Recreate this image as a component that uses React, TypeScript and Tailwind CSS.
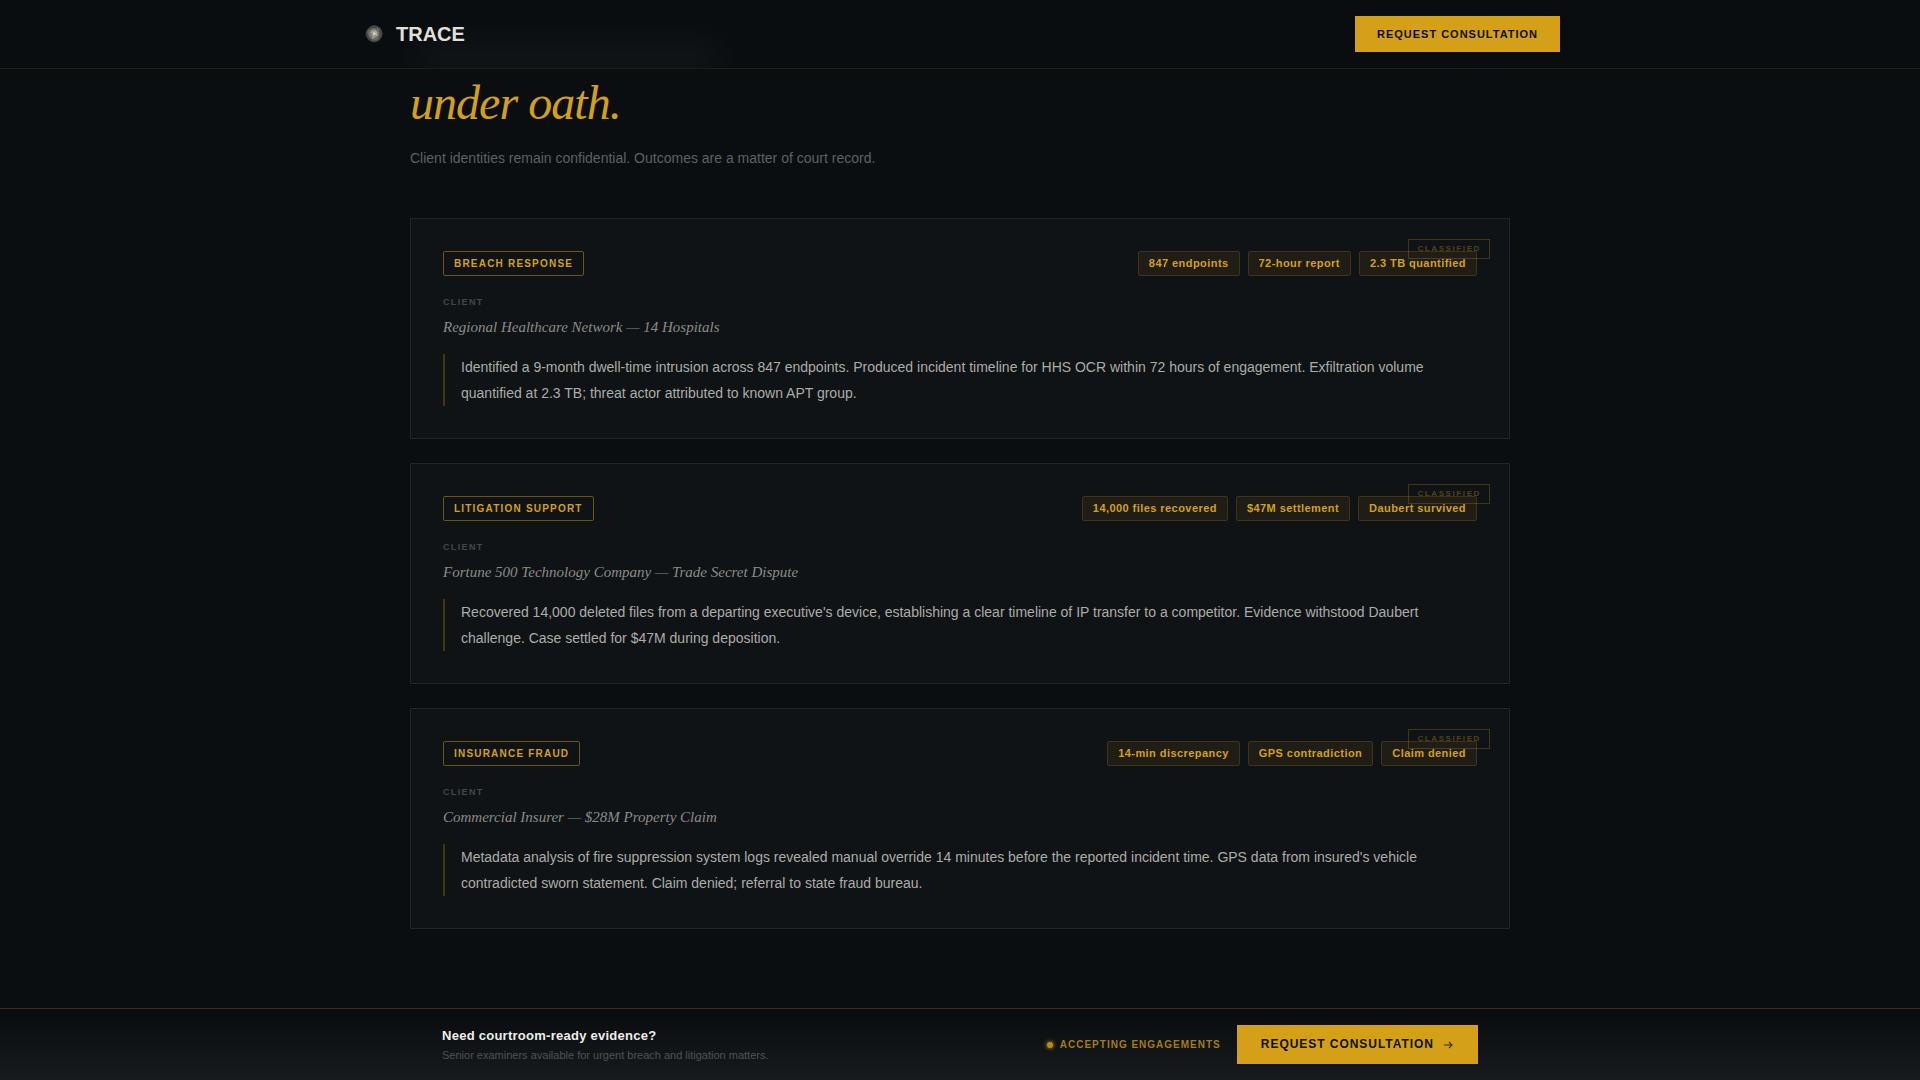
import React from 'react';

interface CaseFile {
  id: string;
  type: string;
  client: string;
  summary: string;
  metrics: string[];
}

const CASES: CaseFile[] = [
  {
    id: 'breach',
    type: 'Breach Response',
    client: 'Regional Healthcare Network — 14 Hospitals',
    summary:
      'Identified a 9-month dwell-time intrusion across 847 endpoints. Produced incident timeline for HHS OCR within 72 hours of engagement. Exfiltration volume quantified at 2.3 TB; threat actor attributed to known APT group.',
    metrics: ['847 endpoints', '72-hour report', '2.3 TB quantified'],
  },
  {
    id: 'litigation',
    type: 'Litigation Support',
    client: 'Fortune 500 Technology Company — Trade Secret Dispute',
    summary:
      "Recovered 14,000 deleted files from a departing executive's device, establishing a clear timeline of IP transfer to a competitor. Evidence withstood Daubert challenge. Case settled for $47M during deposition.",
    metrics: ['14,000 files recovered', '$47M settlement', 'Daubert survived'],
  },
  {
    id: 'fraud',
    type: 'Insurance Fraud',
    client: 'Commercial Insurer — $28M Property Claim',
    summary:
      "Metadata analysis of fire suppression system logs revealed manual override 14 minutes before the reported incident time. GPS data from insured's vehicle contradicted sworn statement. Claim denied; referral to state fraud bureau.",
    metrics: ['14-min discrepancy', 'GPS contradiction', 'Claim denied'],
  },
];

const Logo = () => (
  <svg viewBox="0 0 28 28" className="h-7 w-7" aria-hidden="true">
    <defs>
      <radialGradient id="orb" cx="50%" cy="50%" r="50%">
        <stop offset="0%" stopColor="#b5b3a2" />
        <stop offset="35%" stopColor="#83837a" />
        <stop offset="75%" stopColor="#5c5e58" />
        <stop offset="100%" stopColor="#2c2f2e" />
      </radialGradient>
    </defs>
    <path
      d="M10 6.5 13.5 5l3.5.8 3.2 1.6 1.6 3 1 3.6-1.2 3.4-2.2 3-3.4 1.8-3.6.2-3.4-1.8-2.4-3L5.4 14l1-3.6z"
      fill="url(#orb)"
    />
    <path d="M9 9.5c2-2 5-2.6 7.6-1.6M7.5 14c.2 3 2 5.2 4.5 6M19.5 10.5c1.3 2.5 1 5.5-.8 7.5" fill="none" stroke="#383b36" strokeWidth="1" />
    <path d="M11 13c.4-2 3-3 5-1.6 1.6 1.4 1.2 4-.6 5.1M12.5 19l1.5-4" fill="none" stroke="#c9c6b2" strokeWidth="1" opacity=".7" />
    <circle cx="14.3" cy="13.5" r="1.5" fill="#d0cdba" />
  </svg>
);

const CaseCard = ({ item }: { item: CaseFile }) => (
  <article className="relative border border-[#212527] bg-[#101315] p-8">
    <div className="flex flex-wrap items-center justify-between gap-4">
      <span className="rounded-xs border border-[#6b551b] px-2.5 py-1 text-[10px] leading-[15px] font-bold tracking-[0.12em] text-[#d4a017] uppercase">
        {item.type}
      </span>
      <ul className="flex flex-wrap gap-2">
        {item.metrics.map((m) => (
          <li
            key={m}
            className="rounded-xs border border-[#3f3415] bg-[#1f1d15] px-2.5 py-1 text-[11px] leading-[15px] font-bold tracking-[0.04em] text-[#d4a017]"
          >
            {m}
          </li>
        ))}
      </ul>
    </div>

    <p className="mt-5 text-[9px] leading-3 font-bold tracking-[0.15em] text-[#444749] uppercase">Client</p>
    <h3 className="mt-2 font-['Liberation_Serif',serif] text-[15px] leading-[22px] text-[#8b8b88] italic">{item.client}</h3>
    <p className="mt-4 border-l-2 border-[#44370f] pl-4 text-sm leading-[26px] text-[#acaca8]">{item.summary}</p>

    {/* stamp sits over the metric row */}
    <span className="absolute top-5 right-[19px] border border-[#d4a017]/25 px-2 py-[3px] text-[8px] leading-3 font-bold tracking-[0.2em] text-[#d4a017]/35 uppercase">
      Classified
    </span>
  </article>
);

export default function App() {
  return (
    <div className="flex min-h-screen flex-col bg-[#0a0e11] font-['Liberation_Sans',Arial,sans-serif]">
      {/* Header */}
      <header className="sticky top-0 z-20 overflow-hidden border-b border-[#22200f] bg-[#0a0d0f]">
        <div className="relative mx-auto flex w-full max-w-[1200px] items-center justify-between py-4">
          <div className="pointer-events-none absolute top-9 left-14 h-12 w-76 bg-white/3 blur-lg" />
          <a href="#top" className="relative flex items-center gap-2 text-xl leading-7 font-bold text-[#e2e0db]">
            <Logo />
            TRACE
          </a>
          <button
            type="button"
            className="relative bg-[#d4a017] px-[22px] text-[11px] leading-9 font-bold tracking-[0.09em] text-[#0a0d0f] uppercase"
          >
            Request Consultation
          </button>
        </div>
      </header>

      {/* Case results */}
      <main className="mx-auto w-full max-w-[1100px] grow pt-2 pb-16">
        <h2 className="font-['Liberation_Serif',serif] text-5xl leading-[52px] tracking-[-0.02em] text-[#d4a017] italic">
          under oath.
        </h2>
        <p className="mt-[17px] text-sm leading-6 text-[#5d6163]">
          Client identities remain confidential. Outcomes are a matter of court record.
        </p>
        <div className="mt-12 flex flex-col gap-6">
          {CASES.map((c) => (
            <CaseCard key={c.id} item={c} />
          ))}
        </div>
      </main>

      {/* Bottom call to action */}
      <footer className="sticky bottom-0 z-20 border-t border-[#3a2f15] bg-linear-to-b from-[#090c0e] to-[#171b1d]">
        <div className="mx-auto flex w-full max-w-[1100px] items-center justify-between gap-6 px-8 py-4">
          <div>
            <p className="text-[13px] leading-5 font-bold tracking-[0.02em] text-[#f0eeea]">Need courtroom-ready evidence?</p>
            <p className="text-[11px] leading-[18px] text-[#4f5355]">
              Senior examiners available for urgent breach and litigation matters.
            </p>
          </div>
          <div className="flex items-center gap-4">
            <p className="flex items-center gap-[7px] text-[10px] leading-4 font-bold tracking-[0.1em] text-[#a37c16] uppercase">
              <span className="h-1.5 w-1.5 rounded-full bg-[#b98c18] shadow-[0_0_4px_#d4a017]" />
              Accepting Engagements
            </p>
            <button
              type="button"
              className="flex items-center gap-2 bg-[#d4a017] px-6 text-xs leading-[39px] font-bold tracking-[0.08em] text-[#0a0d0f] uppercase"
            >
              Request Consultation
              <svg viewBox="0 0 12 12" className="h-3 w-3 opacity-80" fill="none" stroke="currentColor" strokeWidth="1.1" aria-hidden="true">
                <path d="M2 6h8M7 3l3 3-3 3" />
              </svg>
            </button>
          </div>
        </div>
      </footer>
    </div>
  );
}
